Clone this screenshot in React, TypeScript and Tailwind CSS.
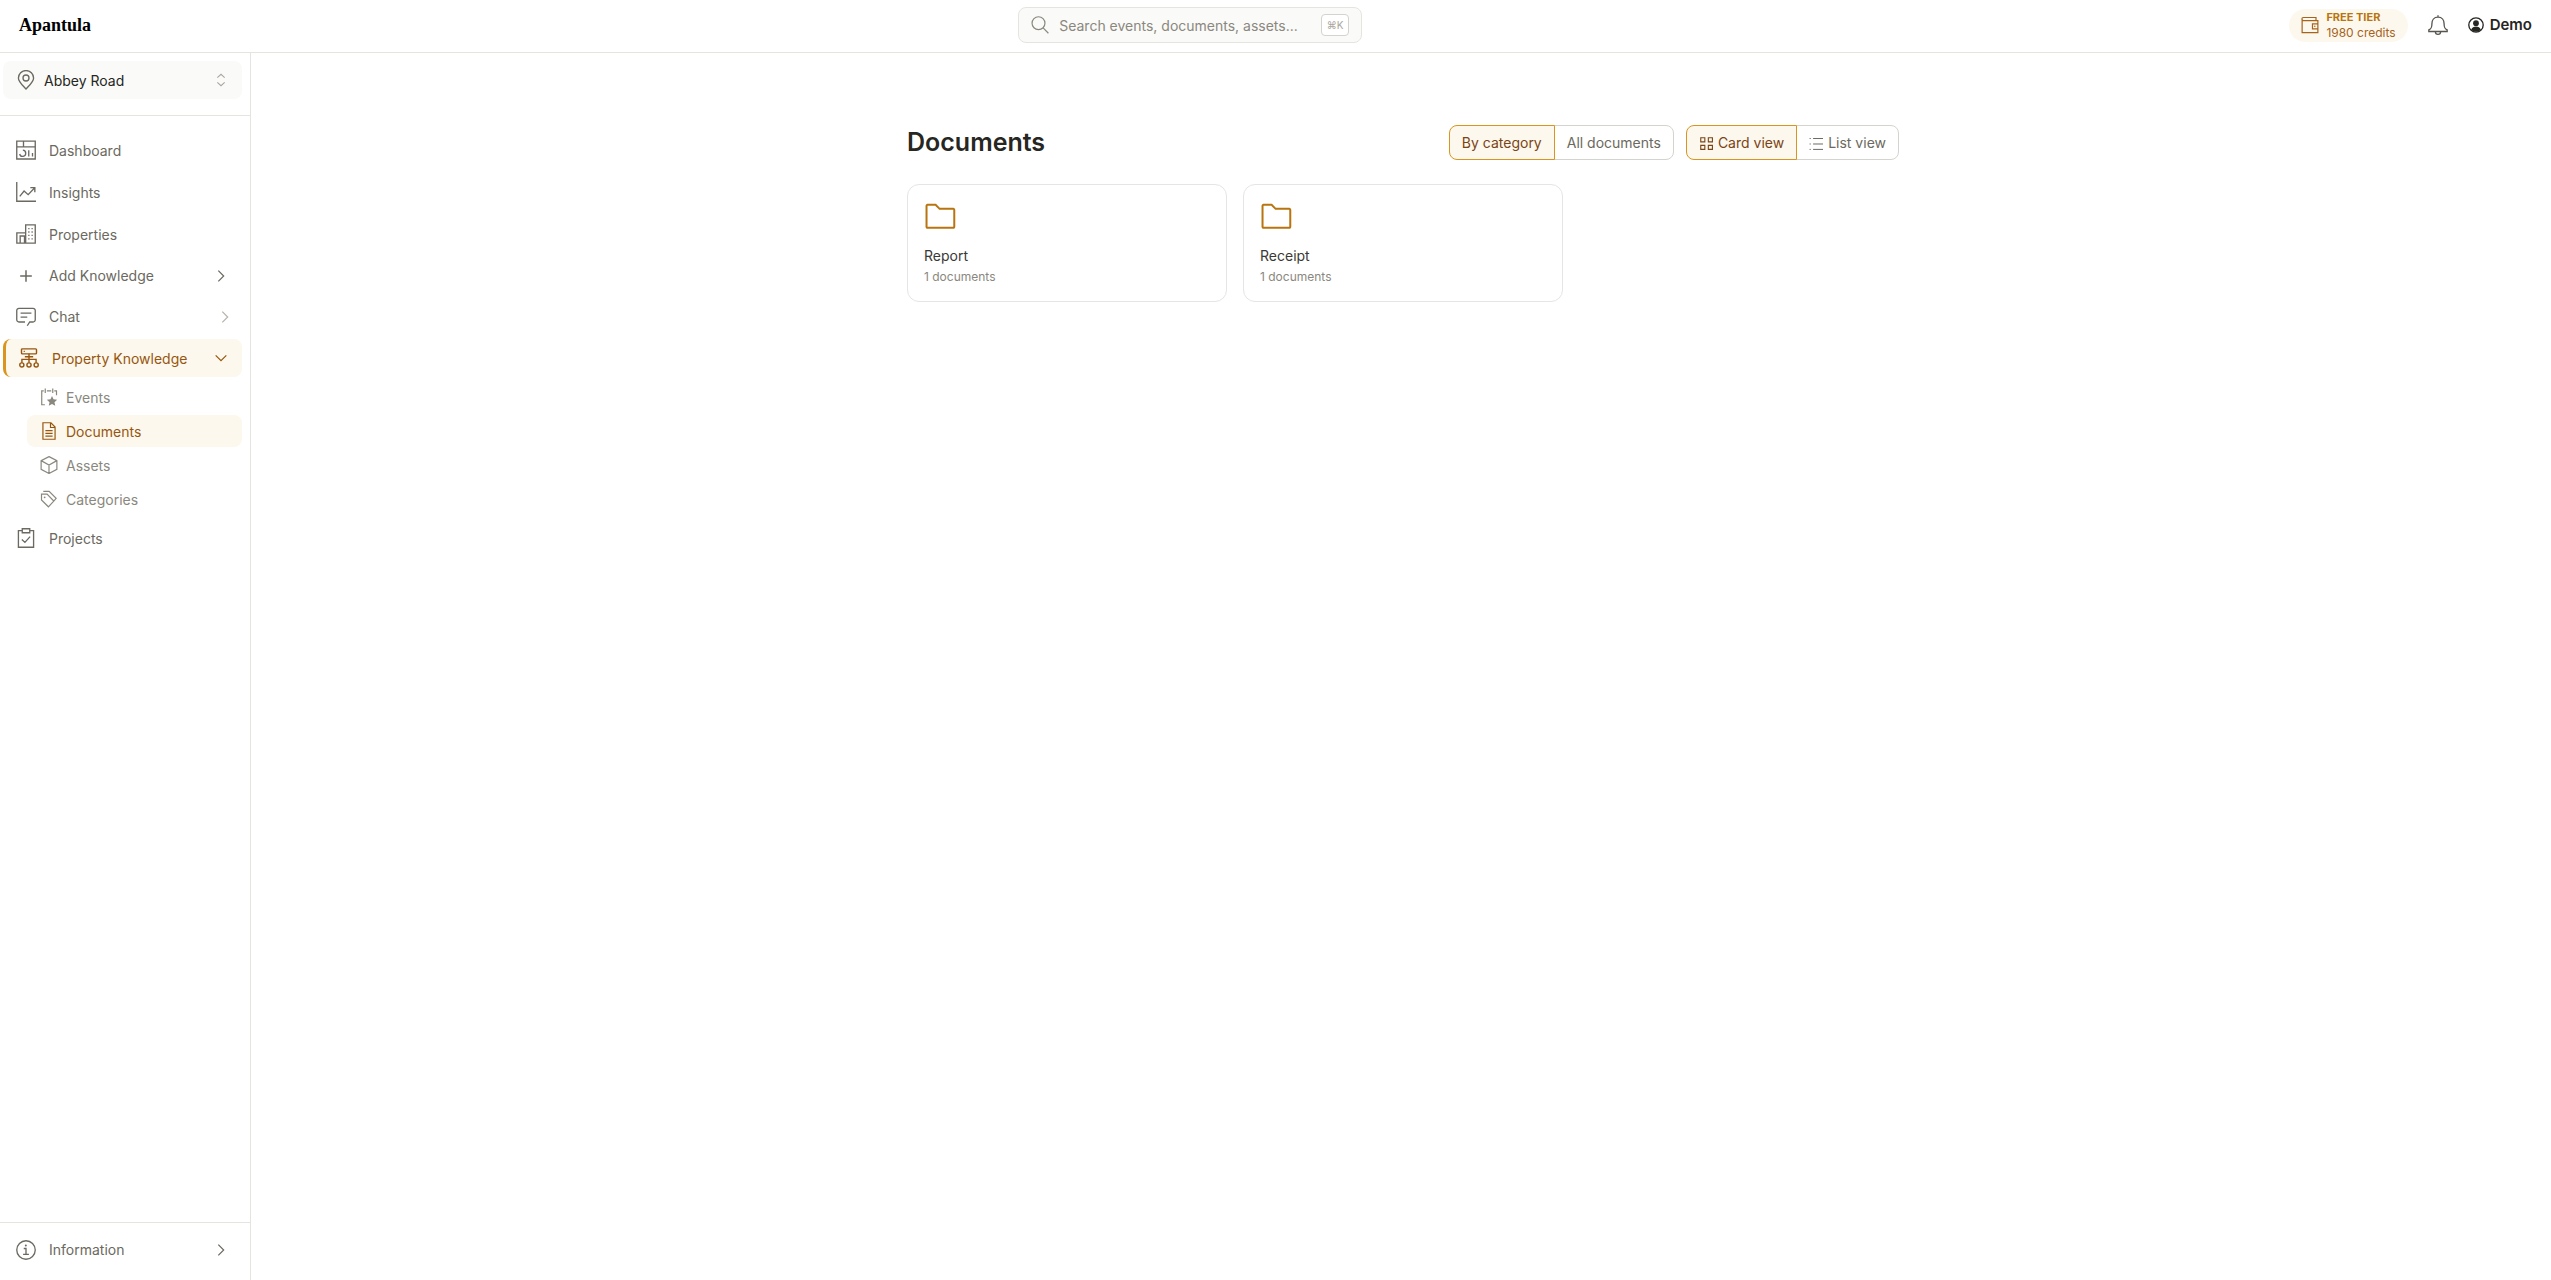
import React, { useState } from 'react';
import clsx from 'clsx';

interface IconProps {
  className?: string;
  size?: number;
  strokeWidth?: number;
  children?: React.ReactNode;
}

const Icon: React.FC<IconProps> = ({ className, size = 20, strokeWidth = 1.6, children }) => (
  <svg
    width={size}
    height={size}
    viewBox="0 0 24 24"
    fill="none"
    stroke="currentColor"
    strokeWidth={strokeWidth}
    className={clsx('shrink-0', className)}
    aria-hidden="true"
  >
    {children}
  </svg>
);

const PinIcon = () => (
  <Icon>
    <path d="M12 22.8C9 19.4 2.9 14.5 2.9 9.6a9.1 8.9 0 0 1 18.2 0C21.1 14.5 15 19.4 12 22.8Z" />
    <circle cx="12" cy="9.6" r="3.6" />
  </Icon>
);

const DashboardIcon = () => (
  <Icon>
    <path d="M.9 1.3h22.2v21.5H.9zM.9 8.2h22.2M9 1.3v6.9" />
    <path d="M8.2 12.2a3.7 3.7 0 1 1-3.8 4.6M15.3 19.8v-7.4M19.8 19.8v-4.2" />
  </Icon>
);

const InsightsIcon = () => (
  <Icon>
    <path d="M.9 0v23.1H24M4.500 17.300l5.200-6.500 4.900 4.400 7.600-8M17.200 6.800h5.400v5.400" />
  </Icon>
);

const PropertiesIcon = () => (
  <Icon>
    <path d="M11.6 10.7V1h11.5v22H1V10.7h10.6V23M5 23v-8.6h5.2V23" />
    <path d="M14.7 5.5h1.5M18.6 5.5h1.5M14.7 9.6h1.5M18.6 9.6h1.5M14.7 13.7h1.5M18.6 13.7h1.5M14.7 17.8h1.5M18.6 17.8h1.5" />
  </Icon>
);

const PlusIcon = () => (
  <Icon strokeWidth={1.8}>
    <path d="M12 5v14M5 12h14" />
  </Icon>
);

const ChatIcon = () => (
  <Icon>
    <path d="M13.5 22.5 16.5 18h4a2.6 2.6 0 0 0 2.6-2.6V4.2A2.6 2.6 0 0 0 20.5 1.6h-17A2.6 2.6 0 0 0 .9 4.2v11.2A2.6 2.6 0 0 0 3.5 18h7.3M5.5 7.4h13M5.5 12.2h8" />
  </Icon>
);

const KnowledgeIcon = () => (
  <Icon strokeWidth={1.7}>
    <rect x="3" y="1" width="18" height="6" rx="1" />
    <path d="M5.6 4h1.4M12 7v10.8M3.5 17.8v-4.2h17v4.2M7 10.4h10" />
    <circle cx="3.4" cy="20.3" r="2.5" />
    <circle cx="12" cy="20.3" r="2.5" />
    <circle cx="20.6" cy="20.3" r="2.5" />
  </Icon>
);

const EventsIcon = () => (
  <Icon size={18}>
    <path d="M6.5 22.3H2.3V3.8H5M9.2 3.8h5.8M19 3.8h3v6M7 .8v6M17 .8v6" />
    <path
      d="m16 10.8 2 4.3 4.9.6-3.6 3.3 1 4.8-4.3-2.4-4.3 2.4 1-4.8-3.6-3.3 4.9-.6Z"
      fill="currentColor"
      stroke="none"
    />
  </Icon>
);

const DocumentsIcon = () => (
  <Icon size={18}>
    <path d="M3.9 1h10.7l5.5 5.7V23H3.9zM14 1v6.3h6.100M7.200 11.500h9.600M7.200 15.200h9.600M7.200 18.900h9.600" />
  </Icon>
);

const AssetsIcon = () => (
  <Icon size={18}>
    <path d="m12 .8 10.5 5.4v11.6L12 23.3 1.5 17.8V6.2ZM1.5 6.2 12 12l10.5-5.8M12 12v11.3" />
  </Icon>
);

const CategoriesIcon = () => (
  <Icon size={18}>
    <path d="M2 5.6h7.4l9 9.2-7.2 7.6L2 13.4ZM4.4 1.9h7.8l9.3 9.3-2.8 3.2" />
    <circle cx="6.2" cy="9.8" r="1.2" fill="currentColor" stroke="none" />
  </Icon>
);

const ProjectsIcon = () => (
  <Icon>
    <path d="M7.5 3.2H2.9v19.9h18.2V3.2h-4.6M7.5.9h9v4.8h-9zM7 13.800l3.700 3.500 6.200-7" />
  </Icon>
);

const InfoIcon = () => (
  <Icon>
    <circle cx="12" cy="12" r="11.1" />
    <path d="M9.3 10.2H12v7M8.5 17.3h7" />
    <circle cx="11.8" cy="6.6" r="1.2" fill="currentColor" stroke="none" />
  </Icon>
);

const WalletIcon = () => (
  <Icon size={18}>
    <path d="M20 6.2V2H3.3a2.1 2.1 0 0 0 0 4.2h19.200v16H1.500V4M22.500 10.500h-7.200v6.600h7.200" />
    <circle cx="18.4" cy="13.8" r="1" fill="currentColor" stroke="none" />
  </Icon>
);

const BellIcon = () => (
  <Icon className="text-[#57554e]">
    <path d="M12 2.6c-5 0-7.300 3.600-7.300 7.800 0 4.600-.6 6.100-3.700 7.500v1.900h22v-1.900c-3.100-1.400-3.700-2.900-3.700-7.500 0-4.200-2.300-7.800-7.300-7.800ZM12 .4v2.200M8.800 19.800a3.200 3.400 0 0 0 6.400 0" />
  </Icon>
);

const UserIcon = () => (
  <Icon size={16} strokeWidth={2}>
    <circle cx="12" cy="12" r="10.8" />
    <circle cx="12" cy="9.3" r="4.3" fill="currentColor" stroke="none" />
    <path
      d="M4.8 19c1.200-3.400 4-4.600 7.200-4.600s6 1.200 7.200 4.600A10 10 0 0 1 12 22a10 10 0 0 1-7.200-3Z"
      fill="currentColor"
      stroke="none"
    />
  </Icon>
);

const SearchIcon = () => (
  <Icon size={18} className="text-[#8a887e]">
    <circle cx="10" cy="9.6" r="8.6" />
    <path d="m16.2 15.8 7 7.2" />
  </Icon>
);

const GridIcon = () => (
  <Icon size={14} strokeWidth={1.9}>
    <path d="M3 3h7v7H3zM16 3h7v7h-7zM3 16h7v7H3zM16 16h7v7h-7z" />
  </Icon>
);

const ListIcon = () => (
  <Icon size={14} strokeWidth={1.7}>
    <path d="M1 4.3h2M7 4.3h17M1 13.7h2M7 13.7h17M1 23h2M7 23h17" />
  </Icon>
);

const FolderIcon = () => (
  <Icon size={32} strokeWidth={1.5} className="text-[#b8740f]">
    <path d="M1.9 3.6a.7.7 0 0 1 .7-.7h6.1l3 3H22a.7.7 0 0 1 .7.7v12.8a.7.7 0 0 1-.7.7H2.6a.7.7 0 0 1-.7-.7Z" />
  </Icon>
);

const Chevron: React.FC<{ className?: string }> = ({ className }) => (
  <Icon size={16} strokeWidth={1.8} className={className}>
    <path d="m8 4 8 8-8 8" />
  </Icon>
);

const SortIcon = () => (
  <Icon size={16} className="text-[#a8a69d]">
    <path d="m6.5 8.5 5.5-5 5.5 5M6.5 15.5l5.5 5 5.5-5" />
  </Icon>
);

const links = [
  { label: 'Dashboard', icon: <DashboardIcon /> },
  { label: 'Insights', icon: <InsightsIcon /> },
  { label: 'Properties', icon: <PropertiesIcon /> },
];

const knowledgeLinks = [
  { label: 'Events', icon: <EventsIcon /> },
  { label: 'Documents', icon: <DocumentsIcon /> },
  { label: 'Assets', icon: <AssetsIcon /> },
  { label: 'Categories', icon: <CategoriesIcon /> },
];

const categories = [
  { name: 'Report', count: 1 },
  { name: 'Receipt', count: 1 },
];

const linkClass = 'flex h-[38px] items-center gap-[13px] rounded-lg px-[13px] hover:bg-[#fafaf8]';
const groupClass = 'flex w-full cursor-pointer items-center gap-[13px] rounded-lg pl-[13px] text-left';

const Header = () => (
  <header className="flex h-[53px] shrink-0 items-center justify-between border-b border-[#e5e5e0] px-[19px] pb-[2px]">
    <a href="#" className="font-['Liberation_Serif',serif] text-[18px] font-bold text-black">
      Apantula
    </a>

    <label className="flex h-9 w-[344px] items-center gap-[10px] rounded-lg border border-[#e5e5e0] bg-[#fafaf8] px-3">
      <SearchIcon />
      <input
        type="text"
        aria-label="Search"
        placeholder="Search events, documents, assets..."
        className="min-w-0 flex-1 bg-transparent outline-none placeholder:text-[#8a887e]"
      />
      <kbd className="flex h-[22px] w-7 items-center justify-center rounded border border-[#d4d4ce] bg-white font-['Inter',sans-serif] text-[10px] text-[#a8a69d]">
        ⌘K
      </kbd>
    </label>

    <div className="flex items-center gap-5">
      <a href="#" className="flex h-[33px] items-center gap-[7px] rounded-full bg-[#fdf8ed] px-3 text-[#a5631c]">
        <WalletIcon />
        <span className="flex flex-col text-[12px] leading-[15px]">
          <span className="text-[11px] font-bold text-[#b8740f]">FREE TIER</span>
          <span>1980 credits</span>
        </span>
      </a>
      <button type="button" aria-label="Notifications" className="cursor-pointer">
        <BellIcon />
      </button>
      <button type="button" className="flex cursor-pointer items-center gap-[6px] text-[15px] font-semibold text-[#262622]">
        <UserIcon />
        Demo
      </button>
    </div>
  </header>
);

const Sidebar = () => {
  const [open, setOpen] = useState(true);

  return (
    <aside className="flex w-[251px] shrink-0 flex-col border-r border-[#e5e5e0]">
      <div className="border-b border-[#e5e5e0] pt-2 pr-2 pb-4 pl-[3px]">
        <button
          type="button"
          className="flex h-[38px] w-full cursor-pointer items-center gap-2 rounded-lg bg-[#fafaf8] px-[13px] text-left text-[#262622]"
        >
          <span className="text-[#6b6960]">
            <PinIcon />
          </span>
          <span className="flex-1">Abbey Road</span>
          <SortIcon />
        </button>
      </div>

      <nav className="flex flex-1 flex-col gap-1 pt-[15px] pr-2 pl-[3px]">
        {links.map((link) => (
          <a key={link.label} href="#" className={linkClass}>
            {link.icon}
            {link.label}
          </a>
        ))}
        <button type="button" className={clsx(groupClass, 'h-[37px] pr-[13px]')}>
          <PlusIcon />
          <span className="flex-1">Add Knowledge</span>
          <Chevron />
        </button>
        <button type="button" className={clsx(groupClass, 'h-[37px] pr-[9px]')}>
          <ChatIcon />
          <span className="flex-1">Chat</span>
          <Chevron className="text-[#b5b3aa]" />
        </button>
        <button
          type="button"
          aria-expanded={open}
          onClick={() => setOpen(!open)}
          className={clsx(groupClass, 'h-[38px] border-l-3 border-[#d9951f] bg-[#fdf8ed] pr-[13px] text-[#96560f]')}
        >
          <KnowledgeIcon />
          <span className="flex-1">Property Knowledge</span>
          <Chevron className={open ? 'rotate-90' : ''} />
        </button>
        {open && (
          <div className="flex flex-col gap-[2px] pl-6">
            {knowledgeLinks.map((link) => (
              <a
                key={link.label}
                href="#"
                className={clsx(
                  'flex h-8 items-center gap-2 rounded-lg px-[13px]',
                  link.label === 'Documents' ? 'bg-[#fdf8ed] text-[#96560f]' : 'text-[#8a887e]'
                )}
              >
                {link.icon}
                {link.label}
              </a>
            ))}
          </div>
        )}
        <a href="#" className={linkClass}>
          <ProjectsIcon />
          Projects
        </a>
      </nav>

      <div className="border-t border-[#e5e5e0] pt-2 pr-2 pb-3 pl-[3px]">
        <button type="button" className={clsx(groupClass, 'h-[37px] pr-[13px]')}>
          <InfoIcon />
          <span className="flex-1">Information</span>
          <Chevron />
        </button>
      </div>
    </aside>
  );
};

interface ToggleProps {
  options: { label: string; icon?: React.ReactNode }[];
}

const Toggle: React.FC<ToggleProps> = ({ options }) => {
  const [selected, setSelected] = useState(options[0].label);

  return (
    <div className="flex">
      {options.map((option) => (
        <button
          key={option.label}
          type="button"
          aria-pressed={selected === option.label}
          onClick={() => setSelected(option.label)}
          className={clsx(
            'flex h-[35px] cursor-pointer items-center gap-[5px] border px-3 first:rounded-l-lg last:-ml-px last:rounded-r-lg',
            selected === option.label
              ? 'relative z-10 border-[#d9951f] bg-[#fdf8ed] text-[#7a4415]'
              : 'border-[#d4d4ce] bg-white text-[#6b6960]'
          )}
        >
          {option.icon}
          {option.label}
        </button>
      ))}
    </div>
  );
};

const Documents = () => (
  <main className="flex-1 pt-[72px] pl-1">
    <div className="mx-auto max-w-[992px]">
      <div className="flex items-center justify-between">
        <h1 className="text-[25px] leading-[35px] font-semibold text-[#262622]">Documents</h1>
        <div className="flex gap-3">
          <Toggle options={[{ label: 'By category' }, { label: 'All documents' }]} />
          <Toggle
            options={[
              { label: 'Card view', icon: <GridIcon /> },
              { label: 'List view', icon: <ListIcon /> },
            ]}
          />
        </div>
      </div>

      <div className="mt-6 grid grid-cols-3 gap-4">
        {categories.map((category) => (
          <a key={category.name} href="#" className="flex flex-col rounded-xl border border-[#e5e5e5] bg-white p-4">
            <FolderIcon />
            <span className="mt-3 leading-[22px] text-[#3a3934]">{category.name}</span>
            <span className="mt-[2px] text-[12px] leading-4 text-[#8a887e]">{category.count} documents</span>
          </a>
        ))}
      </div>
    </div>
  </main>
);

const App = () => (
  <div className="flex min-h-screen flex-col bg-white font-['Inter',sans-serif] text-[14px] text-[#6b6960]">
    <Header />
    <div className="flex flex-1">
      <Sidebar />
      <Documents />
    </div>
  </div>
);

export default App;
